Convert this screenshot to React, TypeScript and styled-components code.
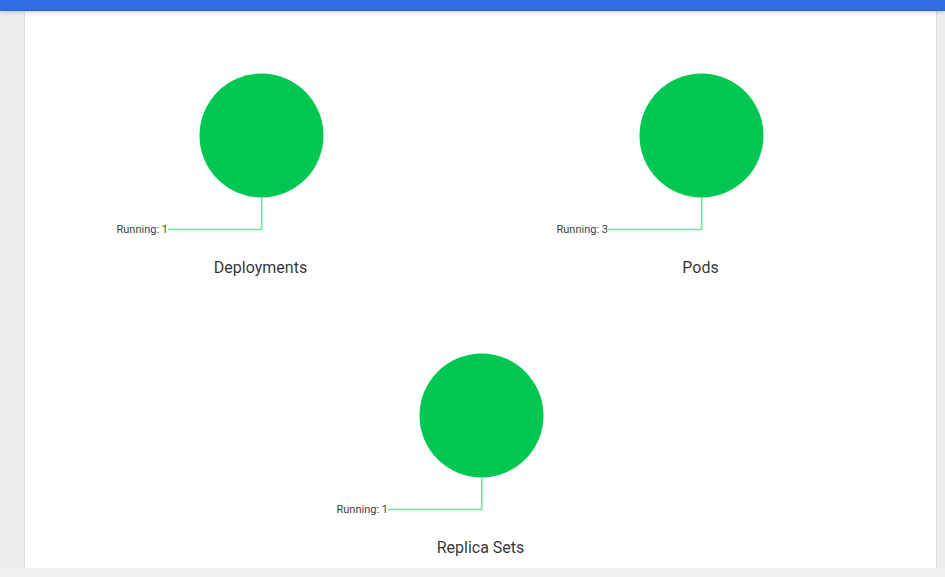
import * as React from "react";
import styled, { createGlobalStyle } from "styled-components";

const GlobalStyle = createGlobalStyle`
  html, body {
    margin: 0;
    padding: 0;
    height: 577px;
    overflow: hidden;
    font-family: Roboto, "Noto Sans", sans-serif;
  }
`;

const Page = styled.div`
  display: flex;
  flex-direction: column;
  height: 577px;
  background-color: #edeef0;
`;

const TopBar = styled.div`
  height: 10px;
  flex-shrink: 0;
  background-color: #326de6;
  border-bottom: 1px solid #2b5fcc;
  box-shadow: 0 1px 4px rgba(0, 0, 0, 0.2);
  position: relative;
  z-index: 1;
`;

const Main = styled.div`
  flex: 1;
  min-height: 0;
  display: flex;
  padding: 0 8px 0 24px;
  overflow: hidden;
`;

const Card = styled.div`
  flex: 1;
  background-color: #ffffff;
  border-left: 1px solid #d9dadc;
  border-right: 1px solid #d9dadc;
  padding-top: 61px;
`;

const Grid = styled.div`
  display: grid;
  grid-template-columns: 440px 440px;
  justify-content: center;
  row-gap: 74px;
`;

const Cell = styled.div<{ $span?: boolean }>`
  display: flex;
  flex-direction: column;
  align-items: center;
  grid-column: ${props => (props.$span ? "1 / span 2" : "auto")};
`;

const Title = styled.div`
  margin-top: 16px;
  font-size: 16px;
  line-height: 20px;
  color: rgba(0, 0, 0, 0.82);
`;

const BottomStrip = styled.div`
  height: 9px;
  flex-shrink: 0;
  background-color: #f0f0f0;
`;

interface ChartProps {
  title: string;
  running: number;
  span?: boolean;
}

const StatusChart = ({ title, running, span }: ChartProps) => {
  return (
    <Cell $span={span}>
      <svg width="440" height="170" viewBox="0 0 440 170">
        <circle cx="220.5" cy="63.5" r="62" fill="#00c752" />
        <polyline
          points="220.75,125 220.75,157.5 127,157.5"
          fill="none"
          stroke="#72e29c"
          strokeWidth="1.5"
        />
        <text
          x="127"
          y="161"
          textAnchor="end"
          fontSize="11"
          fill="rgba(0,0,0,0.8)"
          fontFamily="Roboto, sans-serif"
        >
          Running: {running}
        </text>
      </svg>
      <Title>{title}</Title>
    </Cell>
  );
};

export default function App() {
  return (
    <>
      <GlobalStyle />
      <Page>
        <TopBar />
        <Main>
          <Card>
            <Grid>
              <StatusChart title="Deployments" running={1} />
              <StatusChart title="Pods" running={3} />
              <StatusChart title="Replica Sets" running={1} span />
            </Grid>
          </Card>
        </Main>
        <BottomStrip />
      </Page>
    </>
  );
}
